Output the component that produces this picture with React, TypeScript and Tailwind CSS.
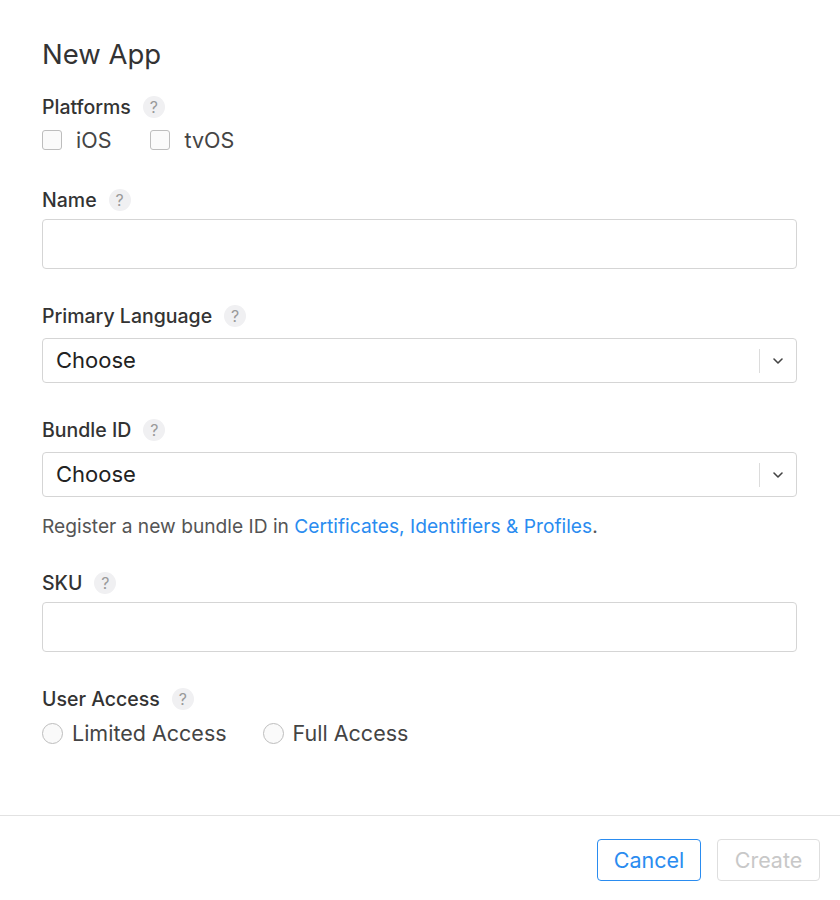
import { ChevronDown } from "lucide-react"

function Help() {
    return (
        <span className="ml-3 inline-flex h-[22px] w-[22px] items-center justify-center rounded-full bg-[#f0f0f2] text-[16px] font-normal leading-none text-[#9a9a9a]">
            ?
        </span>
    )
}

function Label({ text, className = "" }: { text: string; className?: string }) {
    return (
        <div className={`flex h-6 items-center text-[19.5px] font-medium leading-6 text-[#333] ${className}`}>
            {text}
            <Help />
        </div>
    )
}

function Select({ className = "" }: { className?: string }) {
    return (
        <div className={`flex h-[45px] items-center rounded-[4px] border border-[#d5d5d5] bg-white ${className}`}>
            <span className="flex-1 pl-[13px] text-[22px] text-[#222]">Choose</span>
            <span className="h-6 w-px bg-[#dcdcdc]" />
            <span className="flex w-9 items-center justify-center text-[#444]">
                <ChevronDown className="h-4 w-4" strokeWidth={2.4} />
            </span>
        </div>
    )
}

function Checkbox({ label }: { label: string }) {
    return (
        <label className="flex items-center gap-[14px]">
            <span className="h-5 w-5 rounded-[3px] border border-[#bdbdbd] bg-[#fafafa]" />
            <span>{label}</span>
        </label>
    )
}

function Radio({ label }: { label: string }) {
    return (
        <label className="flex items-center gap-[9px]">
            <span className="h-[21px] w-[21px] rounded-full border border-[#bdbdbd] bg-[#fafafa]" />
            <span>{label}</span>
        </label>
    )
}

export default function App() {
    return (
        <div className="flex h-[900px] w-[840px] flex-col bg-white font-['Inter','Liberation_Sans',sans-serif] antialiased">
            <div className="flex flex-col px-[42px] pr-[43px] pt-[37px]">
                <h1 className="text-[27.5px] font-normal leading-[34px] text-[#333]">New App</h1>

                <Label text="Platforms" className="mt-6" />
                <div className="mt-[7px] flex items-center gap-[39px] text-[21.5px] leading-7 text-[#444]">
                    <Checkbox label="iOS" />
                    <Checkbox label="tvOS" />
                </div>

                <Label text="Name" className="mt-[34px]" />
                <input className="mt-[7px] h-[50px] rounded-[4px] border border-[#d5d5d5] px-3 text-[20px] outline-none" />

                <Label text="Primary Language" className="mt-[35px]" />
                <Select className="mt-[10px]" />

                <Label text="Bundle ID" className="mt-[35px]" />
                <Select className="mt-[10px]" />

                <p className="mt-[17px] text-[19.2px] leading-6 text-[#555]">
                    Register a new bundle ID in{" "}
                    <a className="text-[#2a8cf0]">Certificates, Identifiers &amp; Profiles</a>.
                </p>

                <Label text="SKU" className="mt-[33px]" />
                <input className="mt-[7px] h-[50px] rounded-[4px] border border-[#d5d5d5] px-3 text-[20px] outline-none" />

                <Label text="User Access" className="mt-[35px]" />
                <div className="mt-2 flex items-center gap-[36px] text-[21.5px] leading-7 text-[#444]">
                    <Radio label="Limited Access" />
                    <Radio label="Full Access" />
                </div>
            </div>

            <div className="mt-auto border-t border-[#e2e2e2] px-5 pb-[19px] pt-[23px]">
                <div className="flex justify-end gap-4">
                    <button className="h-[42px] w-[104px] rounded-[4px] border border-[#2a8cf0] text-[21.5px] text-[#2a8cf0]">
                        Cancel
                    </button>
                    <button className="h-[42px] w-[103px] rounded-[4px] border border-[#dedede] text-[21.5px] text-[#c8c8c8]">
                        Create
                    </button>
                </div>
            </div>
        </div>
    )
}
